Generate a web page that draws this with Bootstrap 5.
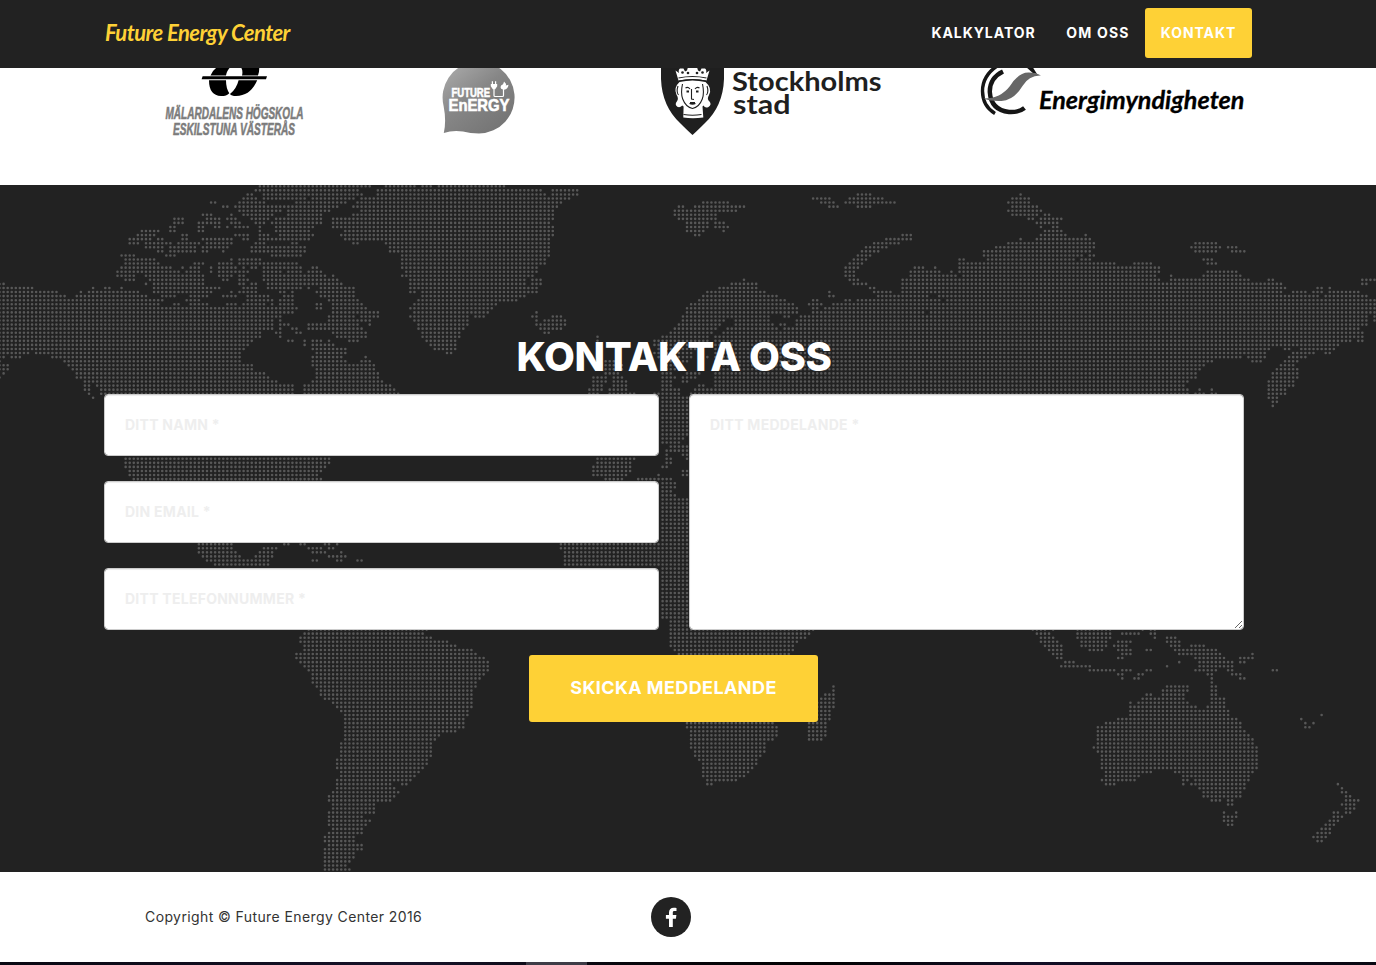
<!DOCTYPE html>
<html lang="sv">
<head>
<meta charset="utf-8">
<meta name="viewport" content="width=device-width, initial-scale=1">
<title>Future Energy Center</title>
<link href="https://cdn.jsdelivr.net/npm/bootstrap@5.3.0/dist/css/bootstrap.min.css" rel="stylesheet">
<style>
  :root { --fec-yellow: #fed136; --fec-dark: #222; }
  body { font-family: Inter, "Open Sans", sans-serif; background: #fff; color: #333; overflow: hidden; }
  .page-shell { width: 1348px; }
  .page-inner { width: 1170px; padding: 0 15px; margin: 0 auto; }
  .topbar { height: 68px; background: var(--fec-dark); padding: 0; }
  .brand { font-family: Lato, sans-serif; font-style: italic; font-weight: 700; font-size: 22px; line-height: 30px; color: var(--fec-yellow); letter-spacing: -.55px; margin: 0; padding: 0 0 2px 1px; }
  .brand:hover { color: var(--fec-yellow); }
  .topbar .menu { margin-right: -8px; margin-top: -2px; }
  .topbar .nav-link { color: #fff; font-size: 14px; font-weight: 700; line-height: 20px; padding: 15px; letter-spacing: .95px; white-space: nowrap; }
  .topbar .nav-link.active { background: var(--fec-yellow); border-radius: 3px; color: #fff; }
  .w-kal { width: 135px; } .w-om { width: 94px; } .w-kon { width: 107px; }
  .w-om .nav-link { letter-spacing: 1.2px; }
  .partners { height: 185px; padding: 68px 0 0 165px; }
  .partners svg { flex: none; height: 70px; }
  .contact { height: 687px; background: var(--fec-dark); overflow: hidden; }
  .world { top: 0; left: 0; }
  .contact h2 { font-size: 40px; font-weight: 800; line-height: 44px; color: #fff; padding-top: 150px; margin-bottom: 15px; letter-spacing: -.4px; }
  .field-grid { display: grid; grid-template-columns: 555px 555px; gap: 30px; }
  .contact .form-control { height: 62px; border: 1px solid #ccc; border-radius: 4px; padding: 19px 20px 21px; font-size: 14px; font-weight: 700; line-height: 20px; letter-spacing: .26px; box-shadow: inset 0 1px 1px rgba(0,0,0,.075); }
  .contact textarea.form-control { height: 236px; min-height: 0; display: block; padding-top: 20px; }
  .contact .form-control::placeholder { color: #eee; opacity: 1; }
  .fields { gap: 25px; }
  .send { width: 289px; height: 67px; margin-top: 25px; margin-left: 425px; padding: 4px 0 6px; background: var(--fec-yellow); border: 0; border-radius: 3px; color: #fff; font-size: 18px; font-weight: 700; letter-spacing: .4px; white-space: nowrap; }
  .send:hover { background: #fec503; color: #fff; }
  .foot { height: 90px; padding-left: 145px; }
  .copy { width: 506px; font-size: 14px; line-height: 20px; letter-spacing: .4px; white-space: nowrap; }
  .social { width: 40px; height: 40px; background: var(--fec-dark); }
  .after-foot { height: 3px; background: linear-gradient(90deg, transparent 526px, #3e3c47 526px, #3e3c47 587px, transparent 587px), linear-gradient(90deg, #090812, #17132a 30%, #08070d 45%, #020203 60%, #120e26 75%, #090812); }
</style>
</head>
<body>
<nav class="navbar fixed-top topbar align-items-start">
  <div class="page-shell h-100">
    <div class="page-inner h-100 d-flex justify-content-between align-items-center">
      <a class="navbar-brand brand" href="#top">Future Energy Center</a>
      <ul class="nav menu text-center">
        <li class="nav-item w-kal"><a class="nav-link px-0" href="#kalkylator">KALKYLATOR</a></li>
        <li class="nav-item w-om"><a class="nav-link px-0" href="#om">OM OSS</a></li>
        <li class="nav-item w-kon"><a class="nav-link active px-0" href="#kontakt">KONTAKT</a></li>
      </ul>
    </div>
  </div>
</nav>

<section class="partners d-flex">
  <svg width="140" viewBox="165 68 140 70" overflow="visible" role="img" aria-label="Mälardalens högskola">
    <path d="M217 67h13.500Q226.500 71 226 75.500H210.500Q212.500 70.500 217 67ZM241 67h18.200Q259.500 72 258 75.500H242Q243.200 71 241 67ZM202.600 76.300H267l-1 2.900h-64.400ZM209 80.300h17Q226 88.500 229.300 93.200 226.500 96.200 221 96.100 209 95.500 209 80.300ZM238.600 80.300h18.600Q250.500 96 236 96.100 231.500 96 230 94 236.500 89 238.600 80.300Z"/>
    <g font-family="Liberation Sans, sans-serif" font-weight="700" font-style="italic" font-size="16.500" fill="#7c7c7c" stroke="#7c7c7c" stroke-width=".55">
      <text x="165.500" y="119" textLength="138" lengthAdjust="spacingAndGlyphs">MÄLARDALENS HÖGSKOLA</text>
      <text x="173" y="135" textLength="122" lengthAdjust="spacingAndGlyphs">ESKILSTUNA VÄSTERÅS</text>
    </g>
  </svg>
  <svg width="73" viewBox="443 68 73 70" overflow="visible" style="margin-left:138px" role="img" aria-label="Future Energy">
    <defs><linearGradient id="bubble" x1="0" y1="0" x2=".8" y2="1"><stop offset="0" stop-color="#b0b0b0"/><stop offset=".5" stop-color="#868686"/><stop offset="1" stop-color="#737373"/></linearGradient></defs>
    <path fill="url(#bubble)" d="M443.800 133Q446.500 121 443.600 106A36 36 0 1 1 479 133.500Q470 133.500 463 131.600 453 130 443.800 133Z"/>
    <g font-family="Liberation Sans, sans-serif" font-weight="700" fill="#fff" stroke="#fff" stroke-width=".6">
      <text x="451.500" y="97.300" font-size="12.500" textLength="38.500" lengthAdjust="spacingAndGlyphs">FUTURE</text>
      <text x="448.500" y="111.300" font-size="17" textLength="61" lengthAdjust="spacingAndGlyphs">EnERGY</text>
    </g>
    <path d="M494 88v7.500q0 1 1 1h7.500q1 0 1-1V89" fill="none" stroke="#fff" stroke-width="1.200"/>
    <path fill="#fff" d="M490.800 84h1V81.300h1.200V84h2v-2.700h1.200V84h1v2.200l-2 3h-2.400l-2-3ZM504 81.500q2.500 2 1.800 4l2.700-.8q-.5 4.300-4.500 5-4-.4-3.300-3.200.5-2 1.800-1.800Q503.800 83.500 504 81.500Z"/>
  </svg>
  <svg width="221" viewBox="661 68 221 70" overflow="visible" style="margin-left:145px" role="img" aria-label="Stockholms stad">
    <path fill="#1f1f1f" d="M661 66h63v13Q723 106 705 123 697 131 692.500 135 688 131 680 123 662 106 661 79Z"/>
    <g fill="#fff">
      <path d="M675.500 70.500l3.500 2.500q-1-3 1-4.500h3.500l1.500 3 2-1 1-3.500h9l1 3.500 2 1 1.500-3h3.500q2 1.500 1 4.500l3.500-2.500-3 10q-14-3-28 0Z"/>
      <path d="M679.500 82q13-3 26 0 7 6 3.500 13-2.500 4 .5 6.500 2.500 3-1 5.500-3.500 1.500-5-1.500l-1 1 .8 11q-10.800 1.500-20 0l.3-11-1.300-1q-2.500 2.500-5 1.200-3-2.500-.3-5.500 2-3-.5-6.500-3.200-7 3-12.700Z"/>
    </g>
    <g fill="#1f1f1f"><circle cx="682.500" cy="72.500" r="1.300"/><circle cx="688" cy="73" r="1.300"/><circle cx="697" cy="73" r="1.300"/><circle cx="702.500" cy="72.500" r="1.300"/></g>
    <g fill="none" stroke="#1f1f1f" stroke-width="1.100">
      <path d="M678.500 78q14-3 28 0M679 81q13.500-3 27 0M682.500 84q-2 9 .2 15 3 8 9.800 9.500 6.800-1.500 9.800-9.500 2.200-6 .2-15"/>
      <path d="M685.500 88q2.500-1.500 4.500 1M695 89q2-2.500 4.500-1M691.500 89v10l2.500.500M689.500 103.500q3 1.500 6 0M683.500 114.500q9 1.500 18 0M678 86q-2 6 .5 9M707 86q2 6-.5 9"/>
      <path stroke-width="2" d="M686.500 91.500h2.500M696 91.500h2.500M690 103h5"/>
    </g>
    <g font-family="Lato, sans-serif" font-weight="700" fill="#1f1f1f">
      <text x="732" y="90.500" font-size="26" textLength="149.500" lengthAdjust="spacingAndGlyphs">Stockholms</text>
      <text x="733" y="114.300" font-size="26" textLength="57.500" lengthAdjust="spacingAndGlyphs">stad</text>
    </g>
  </svg>
  <svg width="265" viewBox="980 68 265 70" overflow="visible" style="margin-left:98px" role="img" aria-label="Energimyndigheten">
    <path d="M997 66Q982.500 76 982.500 91T995 113.500" fill="none" stroke="#151515" stroke-width="3.400"/>
    <path d="M1003 71.500Q989.500 78 989.800 92 991 110 1009 112 1019 112.500 1024.500 108" fill="none" stroke="#151515" stroke-width="4.400"/>
    <path fill="#151515" d="M1025 66h7l5 8-4-.8Z"/>
    <path fill="#676767" d="M983 98.500Q1000 99 1010 86 1019 72 1029 72.500 1036 72.500 1041 75.500 1029 75 1022.500 86 1014 100 1001.500 101 991 101.500 983 98.500Z"/>
    <text x="1039" y="109" font-family="Lato, sans-serif" font-weight="700" font-style="italic" font-size="25.500" stroke="#000" stroke-width=".3" textLength="205.500" lengthAdjust="spacingAndGlyphs">Energimyndigheten</text>
  </svg>
</section>

<section class="contact position-relative" id="kontakt">
  <svg class="world position-absolute" width="1376" height="687" viewBox="0 185 1376 687" aria-hidden="true">
    <path id="worldDots" fill="none" stroke="#585858" stroke-width="2.600" stroke-linecap="round" stroke-dasharray="0 4.068"/>
  </svg>
  <div class="page-shell position-relative">
    <div class="page-inner">
      <h2 class="text-center">KONTAKTA OSS</h2>
      <form>
        <div class="field-grid">
          <div class="fields d-flex flex-column">
            <input type="text" class="form-control" placeholder="DITT NAMN *" aria-label="Ditt namn">
            <input type="email" class="form-control" placeholder="DIN EMAIL *" aria-label="Din email">
            <input type="tel" class="form-control" placeholder="DITT TELEFONNUMMER *" aria-label="Ditt telefonnummer">
          </div>
          <textarea class="form-control" placeholder="DITT MEDDELANDE *" aria-label="Ditt meddelande"></textarea>
        </div>
        <button type="button" class="btn send">SKICKA MEDDELANDE</button>
      </form>
    </div>
  </div>
</section>

<footer class="foot d-flex align-items-center">
  <div class="copy">Copyright © Future Energy Center 2016</div>
  <a class="social rounded-circle d-flex" href="#facebook" aria-label="Facebook">
    <svg width="40" height="40" viewBox="0 0 40 40"><path fill="#fff" d="M25.500 10.900v3.200h-1.900c-1.500 0-1.800.7-1.800 1.700v2.300h3.600l-.5 3.600h-3.100v8.300H18v-8.300h-3.100v-3.600H18v-2.700c0-3.100 1.900-4.700 4.700-4.700 1.300 0 2.400.1 2.800.2Z"/></svg>
  </a>
</footer>
<div class="after-foot"></div>

<script src="https://cdn.jsdelivr.net/npm/bootstrap@5.3.0/dist/js/bootstrap.bundle.min.js"></script>
<script>
// Land on the dotted map: "row: from-to, from-to ...", x in pixels, rows 4.067px apart.
const land = `
0:260-371,385-414,422-431,438-505
1:256-359,377-541,552-578
2:247-251,262-363,377-545,552-578,858-871,1021
3:243-256,264-303,311-353,361-570,812-830,849-883,1012-1030
4:211-215,238-264,295-346,357-561,702-729,820-835,845-896,1008-1030
5:223-227,236-338,353-557,678-683,695-745,829-838,857-871,1012-1037
6:240-280,288-330,361-553,674-737,1008-1041
7:202-212,231,243-271,287-321,353-551,674-717,1012-1037,1045-1049
8:174-183,207-220,227-236,251-266,275-321,333-551,678-717,1029-1033,1041-1062
9:174-183,198-202,207-220,231-240,256-262,271,275-321,333-549,686-708,715-725,1037-1058
10:170-174,199-203,215-220,227,235-248,258,275-312,333-551,686-706,715-729,1041,1053-1058
11:141-158,170-174,199-203,259,275-309,345-553,686-704,724,1045-1062
12:137-150,154,182-187,235-248,258-268,279-312,341-553,694-700,903-912,1041-1066,1086
13:130-146,150,158-162,182-187,202-232,243-248,258-295,300-308,345-549,886-912,1021,1037-1090
14:130-138,146-170,179-199,207-232,255-264,292-297,354-358,385-549,873-899,1008-1094,1196-1217
15:146-162,170-195,202-226,252-305,389-549,866-887,996-1094,1192-1221,1228-1237
16:158-162,170-195,203-207,223,252-305,389-549,862-879,984-1090,1196-1217,1232-1245
17:121-134,166-174,271-301,402-549,858-871,984-1083,1090-1094
18:126-154,231,239-260,402-546,853-867,958-965,987-1075,1082-1090,1203-1212
19:126-158,194-203,219-232,239-260,264-297,402-545,849-863,958-1115,1135-1152,1207-1217
20:121-171,182,190-199,211,219-236,243,252-256,264-301,312-317,402-537,845-858,914-923,935,958-1160
21:117-179,186-199,211,219-227,231-248,264-280,288-301,309-321,406-537,845-855,910-928,933-940,952,958-1160,1207-1237
22:117-134,146-203,219-232,239-243,264-325,333,403-533,845-855,910-928,931-945,948-957,962-1156,1171,1203-1241
23:125-134,150-203,223-227,239-248,264-337,411-526,534-541,744,849-858,903-928,931,935-948,952-1160,1171-1249,1268-1273,1362-1376
24:0-4,146,154-203,239-243,251-256,267-341,410-525,533-541,731-757,853-867,903-925,931-950,953-1282,1362-1366
25:0-32,93,105-109,121,154-219,243-256,268-300,308,320-354,410-538,720-757,870-875,903-928,933-1285,1317-1322,1330
26:0-57,81,89-138,154-211,231,240-256,280-283,292,316-354,410-414,422-537,707-765,829,873-892,903-928,931-945,948-1282,1292-1306,1313-1322,1330-1359
27:0-65,77-146,163-175,190-207,223-236,247-260,264-268,284-294,321-354,422-525,702-777,829-834,877-899,903-928,940-1318,1325-1367
28:0-162,186-199,247-271,280-294,329-358,418-517,698-786,812-818,845-851,857-928,933-940,948-1376
29:0-160,175-179,190-207,227-236,243-264,272,280-292,317-321,332-362,414-496,690-794,808-823,832-928,931-1376
30:0-297,317-321,332-365,410-493,686-798,812-817,825-928,933-1376
31:0-293,332-378,414-489,537,686-767,770-798,812-922,930-1376
32:0-275,280,329-353,361-378,410-469,474-485,532-537,552-562,682-768,784-790,800-1367,1374
33:0-272,280,329-362,365-370,414-467,537,545-566,682-722,735-768,795-1367,1374
34:0-272,280-288,308-325,329-358,370,418-467,536-566,678-718,735-772,780-786,796-1366
35:0-272,280,292-297,309-325,329-362,418-465,541-562,674-717,728-777,785-1360
36:0-260,276-280,296-301,333-366,422-461,544-549,670-713,724-1363
37:0-260,280,337-366,422-458,597,662-708,715-1363
38:0-252,288-292,304,312-321,329,349-358,427-456,597,653-707,715-1352,1358-1363
39:0-248,305,312-333,430-456,655-707,715-1339
40:0-243,312-345,434-456,657-700,715-1268,1284-1290,1300-1335
41:0-28,36-240,316-345,447-451,655-690,715-1265,1292-1315,1325-1330
42:0-4,12-20,53-240,312-341,365,657-690,708,715-1242,1249-1265,1288-1306
43:0,65-240,312-345,361-370,605-612,662-685,715-1213,1253-1262,1284-1298
44:0-8,70-252,312-373,601-620,668-680,715-1205,1280-1295
45:0-8,73-252,316-374,605-620,664-676,715-1200,1276-1299
46:4,77-264,316-378,607-618,664-672,688-700,715-1197,1272-1299
47:0,77-81,85-268,316-378,592-605,612-623,662-673,683-697,715-1197,1272-1299
48:85-276,312-382,592-605,612-627,662-671,683-688,715-1188,1268-1295
49:85-89,97-293,305-390,592-600,613-627,664-671,698-704,715-1184,1268-1293
50:85-89,101-293,305-394,588-600,609-627,664-680,695-1188,1200,1212,1268-1287
51:89,101-293,305-398,590-597,608-635,655-680,692-1188,1195-1205,1212-1217,1268-1285
52:93,661-689,1268-1278
53:661-689,1272-1278
54:661-689,1273
55-61:661-689
62:661-684
63:661-680
64:670-688
65:666-688
66:667,683-688
67:125-331,596-635,667-672,688
68:125-331,596-631,667-672
69:125-327,592-631,662-667
70:129-318,322,592-631,684-688
71:129-318,592-628,659,684-688
72:133-322,605-623,638-672
73:661-676
74:661-676
75:661-672
76:661-676
77-87:661-689
88:198-233,284-289,300-305,324-330,337,560-689
89:198-233,263-277,309-322,328-333,560-689
90:198-237,259-273,312-326,341,564-689
91:202-240,255-273,328-346,564-689
92:205-269,312-318,336-342,356-363,564-689
93:214-269,564-689
94-106:661-689
107-108:670-689
109:308-427,670-813,1032-1046,1053,1077-1111,1143,1150-1156
110:304-423,670-810,1037-1050,1077-1111,1122-1139,1151-1156
111:300-432,670-806,1041-1054,1077-1111,1155,1167-1177
112:300-448,670-797,1041-1058,1081-1108,1118-1131,1167-1180
113:304-456,670-793,1045-1062,1081-1108,1114-1128,1171-1181,1191-1204
114:304-472,674-793,1049-1062,1089-1103,1118-1122,1127-1131,1147-1151,1175-1217
115:296-476,678-790,1053-1062,1122-1131,1179-1220,1253
116:296-484,1057-1062,1118-1122,1195-1224,1240-1253
117:300-488,1065-1074,1179,1199-1232,1240-1245
118:304-488,1061-1090,1167,1199-1232
119:308-488,1089-1115,1122-1131,1147-1151,1195-1217,1228-1232,1273-1277
120:312-484,1118-1122,1138-1143,1207-1213,1232-1241
121:312-480,1122,1134-1139,1212,1241-1245
122:312-476,1212
123:316-476,833,1167-1188,1212-1216
124:320-472,833,1163-1188,1212-1216
125:320-472,825-833,1147-1151,1163-1184,1212-1216
126:324-472,821-833,1142-1184,1212-1224
127:333-472,817-833,1130,1138-1188,1212-1224
128:337-472,817-833,1130-1196,1207-1224
129:341-468,817-829,1130-1228
130:345-468,817-829,1130-1228,1322
131:345-464,817-829,1118-1237,1301
132:345-464,687-773,809-825,1106-1241,1305,1313
133:345-464,687-777,809-825,1098-1241,1305-1310
134:345-456,690-777,809-825,1098-1245
135:345-440,690-777,809-825,1098-1249
136:345-435,690-773,809-821,1098-1253
137:341-431,690-765,1098-1253
138:341-431,690-765,1094-1257
139:341-431,694-765,1098-1257
140:341-431,694-761,1102-1257
141:337-428,699-757,1102-1257
142:337-428,702-757,1102-1257
143:337-423,702-753,1102-1257
144:341-419,702-749,1106-1152,1175-1254
145:341-415,702-744,1106-1139,1183-1250
146:337-411,706-736,1102-1135,1183-1188,1195-1249
147:337-392,402-407,706-711,1106-1115,1183,1191-1245,1338
148:337-395,1199-1245,1342
149:333-398,1203-1241,1342-1346
150:329-394,1203-1241,1346-1350
151:329-391,1212-1220,1228-1232,1346-1358
152:333-375,1228-1232,1342-1354
153:333-375,1346-1354
154:329-375,1224,1236,1334-1338,1346-1350
155:329-362,1224-1236,1334-1342
156:329-370,1224-1232,1330-1338
157:329-366,1228-1232,1326-1334
158:333-362,1322-1330
159:329-362,1318-1330
160:325-354,1313-1326
161:325-354,1318-1322
162:329-362
163:325-362
164-165:325-354
166:325-350
167:325-346
168:325-350`;
const pitch = 4.068, left = -0.47, top0 = 186.3, rowStep = 4.067;
let d = "";
for (const line of land.trim().split("\n")) {
  const [rows, runs] = line.split(":");
  const [first, last = first] = rows.split("-").map(Number);
  for (let r = first; r <= last; r++) {
    const y = (top0 + r * rowStep).toFixed(2);
    for (const run of runs.split(",")) {
      const [a, b = a] = run.split("-").map(Number);
      const i = Math.round((a - left) / pitch), n = Math.max(0, Math.round((b - left) / pitch) - i);
      d += `M${(left + i * pitch).toFixed(2)} ${y}h${(n * pitch + 0.05).toFixed(2)}`;
    }
  }
}
document.getElementById("worldDots").setAttribute("d", d);
</script>
</body>
</html>
